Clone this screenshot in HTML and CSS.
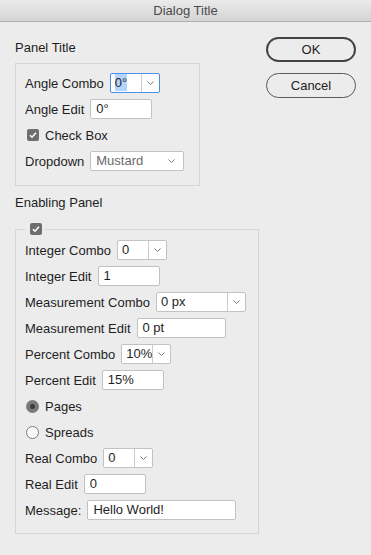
FILE: index.html
```html
<!doctype html>
<html lang="en">
    <head>
        <meta charset="UTF-8" />
        <meta name="viewport" content="width=device-width, initial-scale=1.0" />
        <title>Dialog Title</title>
        <link rel="stylesheet" href="styles.css">
    </head>
    <body>
        <div class="window">
            <div class="titlebar">Dialog Title</div>

            <div class="content">
                <div class="form">
                    <div class="section-title">Panel Title</div>
                    <div class="panel">
                        <div class="row">
                            <span class="label">Angle Combo</span>
                            <div class="combo focused w50">
                                <span class="value"><span class="selected">0°</span></span>
                                <span class="arrow"><svg width="7" height="4" viewBox="0 0 7 4"><polyline points="0.5,0.5 3.5,3.5 6.5,0.5" /></svg></span>
                            </div>
                        </div>
                        <div class="row">
                            <span class="label">Angle Edit</span>
                            <div class="edit w62">0°</div>
                        </div>
                        <div class="row">
                            <span class="checkbox"><svg width="12" height="12" viewBox="0 0 12 12"><polyline points="3,6.2 5,8.2 9,3.8" /></svg></span>
                            <span class="label">Check Box</span>
                        </div>
                        <div class="row">
                            <span class="label">Dropdown</span>
                            <div class="dropdown w94">
                                <span class="value">Mustard</span>
                                <svg width="7" height="4" viewBox="0 0 7 4"><polyline points="0.5,0.5 3.5,3.5 6.5,0.5" /></svg>
                            </div>
                        </div>
                    </div>

                    <div class="section-title second">Enabling Panel</div>
                    <fieldset class="panel enabling">
                        <legend>
                            <span class="checkbox"><svg width="12" height="12" viewBox="0 0 12 12"><polyline points="3,6.2 5,8.2 9,3.8" /></svg></span>
                        </legend>
                        <div class="row">
                            <span class="label">Integer Combo</span>
                            <div class="combo w50">
                                <span class="value">0</span>
                                <span class="arrow"><svg width="7" height="4" viewBox="0 0 7 4"><polyline points="0.5,0.5 3.5,3.5 6.5,0.5" /></svg></span>
                            </div>
                        </div>
                        <div class="row">
                            <span class="label">Integer Edit</span>
                            <div class="edit w62">1</div>
                        </div>
                        <div class="row">
                            <span class="label">Measurement Combo</span>
                            <div class="combo w90">
                                <span class="value">0 px</span>
                                <span class="arrow"><svg width="7" height="4" viewBox="0 0 7 4"><polyline points="0.5,0.5 3.5,3.5 6.5,0.5" /></svg></span>
                            </div>
                        </div>
                        <div class="row">
                            <span class="label">Measurement Edit</span>
                            <div class="edit w89">0 pt</div>
                        </div>
                        <div class="row">
                            <span class="label">Percent Combo</span>
                            <div class="combo w50">
                                <span class="value">10%</span>
                                <span class="arrow"><svg width="7" height="4" viewBox="0 0 7 4"><polyline points="0.5,0.5 3.5,3.5 6.5,0.5" /></svg></span>
                            </div>
                        </div>
                        <div class="row">
                            <span class="label">Percent Edit</span>
                            <div class="edit w62">15%</div>
                        </div>
                        <div class="row">
                            <span class="radio checked"></span>
                            <span class="label">Pages</span>
                        </div>
                        <div class="row">
                            <span class="radio"></span>
                            <span class="label">Spreads</span>
                        </div>
                        <div class="row">
                            <span class="label">Real Combo</span>
                            <div class="combo w50">
                                <span class="value">0</span>
                                <span class="arrow"><svg width="7" height="4" viewBox="0 0 7 4"><polyline points="0.5,0.5 3.5,3.5 6.5,0.5" /></svg></span>
                            </div>
                        </div>
                        <div class="row">
                            <span class="label">Real Edit</span>
                            <div class="edit w62">0</div>
                        </div>
                        <div class="row">
                            <span class="label">Message:</span>
                            <div class="edit w149">Hello World!</div>
                        </div>
                    </fieldset>
                </div>

                <div class="buttons">
                    <button class="button default">OK</button>
                    <button class="button">Cancel</button>
                </div>
            </div>
        </div>
    </body>
</html>
```

FILE: styles.css
```css
* {
    margin: 0;
    padding: 0;
    box-sizing: border-box;
}
body {
    font-family: "Liberation Sans", Arial, sans-serif;
    font-size: 13px;
    color: #1e1e1e;
    background-color: #ececec;
}
.window {
    width: 371px;
    height: 555px;
    background-color: #ececec;
}
.titlebar {
    height: 22px;
    line-height: 21px;
    text-align: center;
    color: #4a4a4a;
    background: linear-gradient(#ebebeb, #d4d4d4);
    border-bottom: 1px solid #b0b0b0;
}
.content {
    display: flex;
    justify-content: space-between;
    padding: 0 15px;
}
.form {
    padding-top: 18px;
}
.section-title {
    line-height: 16px;
    margin-bottom: 7px;
}
.section-title.second {
    margin-top: 9px;
    margin-bottom: 12px;
}
.panel {
    width: 185px;
    border: 1px solid #d6d6d6;
    padding: 9px 9px 14px;
    display: flex;
    flex-direction: column;
    gap: 6px;
}
.panel.enabling {
    width: 244px;
    padding: 5px 9px 13px;
    min-width: 0;
}
.enabling legend {
    padding: 0 3px 0 5px;
}
.enabling legend .checkbox {
    display: block;
    margin-left: 0;
}
.row {
    display: flex;
    align-items: center;
    height: 20px;
    gap: 6px;
}
.label {
    white-space: nowrap;
}
.edit,
.combo,
.dropdown {
    height: 20px;
    background-color: #ffffff;
    border: 1px solid #c2c2c2;
    border-radius: 2px;
    line-height: 18px;
}
.edit {
    padding-left: 5px;
}
.combo {
    display: flex;
}
.combo .value {
    flex: 1;
    padding-left: 4px;
}
.combo .arrow {
    width: 18px;
    border-left: 1px solid #cccccc;
    display: flex;
    align-items: center;
    justify-content: center;
}
.combo.focused {
    border-color: #4a90e6;
}
.selected {
    background-color: #b3d4fb;
    padding: 1px 0;
}
.dropdown {
    display: flex;
    align-items: center;
    justify-content: space-between;
    padding: 0 8px 0 5px;
    color: #6a6a6a;
}
svg polyline {
    fill: none;
    stroke: #7a7a7a;
    stroke-width: 1;
}
.checkbox {
    width: 12px;
    height: 12px;
    margin-left: 2px;
    border-radius: 2px;
    background-color: #6e6e6e;
}
.checkbox svg polyline {
    stroke: #ffffff;
    stroke-width: 1.6;
}
.radio {
    width: 13px;
    height: 13px;
    margin-left: 1px;
    border-radius: 50%;
    border: 1px solid #7c7c7c;
    background-color: #fafafa;
}
.radio.checked {
    border: 4px solid #7a7a7a;
    background-color: #3c3c3c;
}
.w50 { width: 50px; }
.w62 { width: 62px; }
.w89 { width: 89px; }
.w90 { width: 90px; }
.w94 { width: 94px; }
.w149 { width: 149px; }
.buttons {
    padding-top: 15px;
    display: flex;
    flex-direction: column;
    gap: 11px;
}
.button {
    width: 90px;
    height: 25px;
    font-family: inherit;
    font-size: 13px;
    color: #222222;
    background: transparent;
    border: 1px solid #5a5a5a;
    border-radius: 13px;
}
.button.default {
    border: 2px solid #444444;
}
```
